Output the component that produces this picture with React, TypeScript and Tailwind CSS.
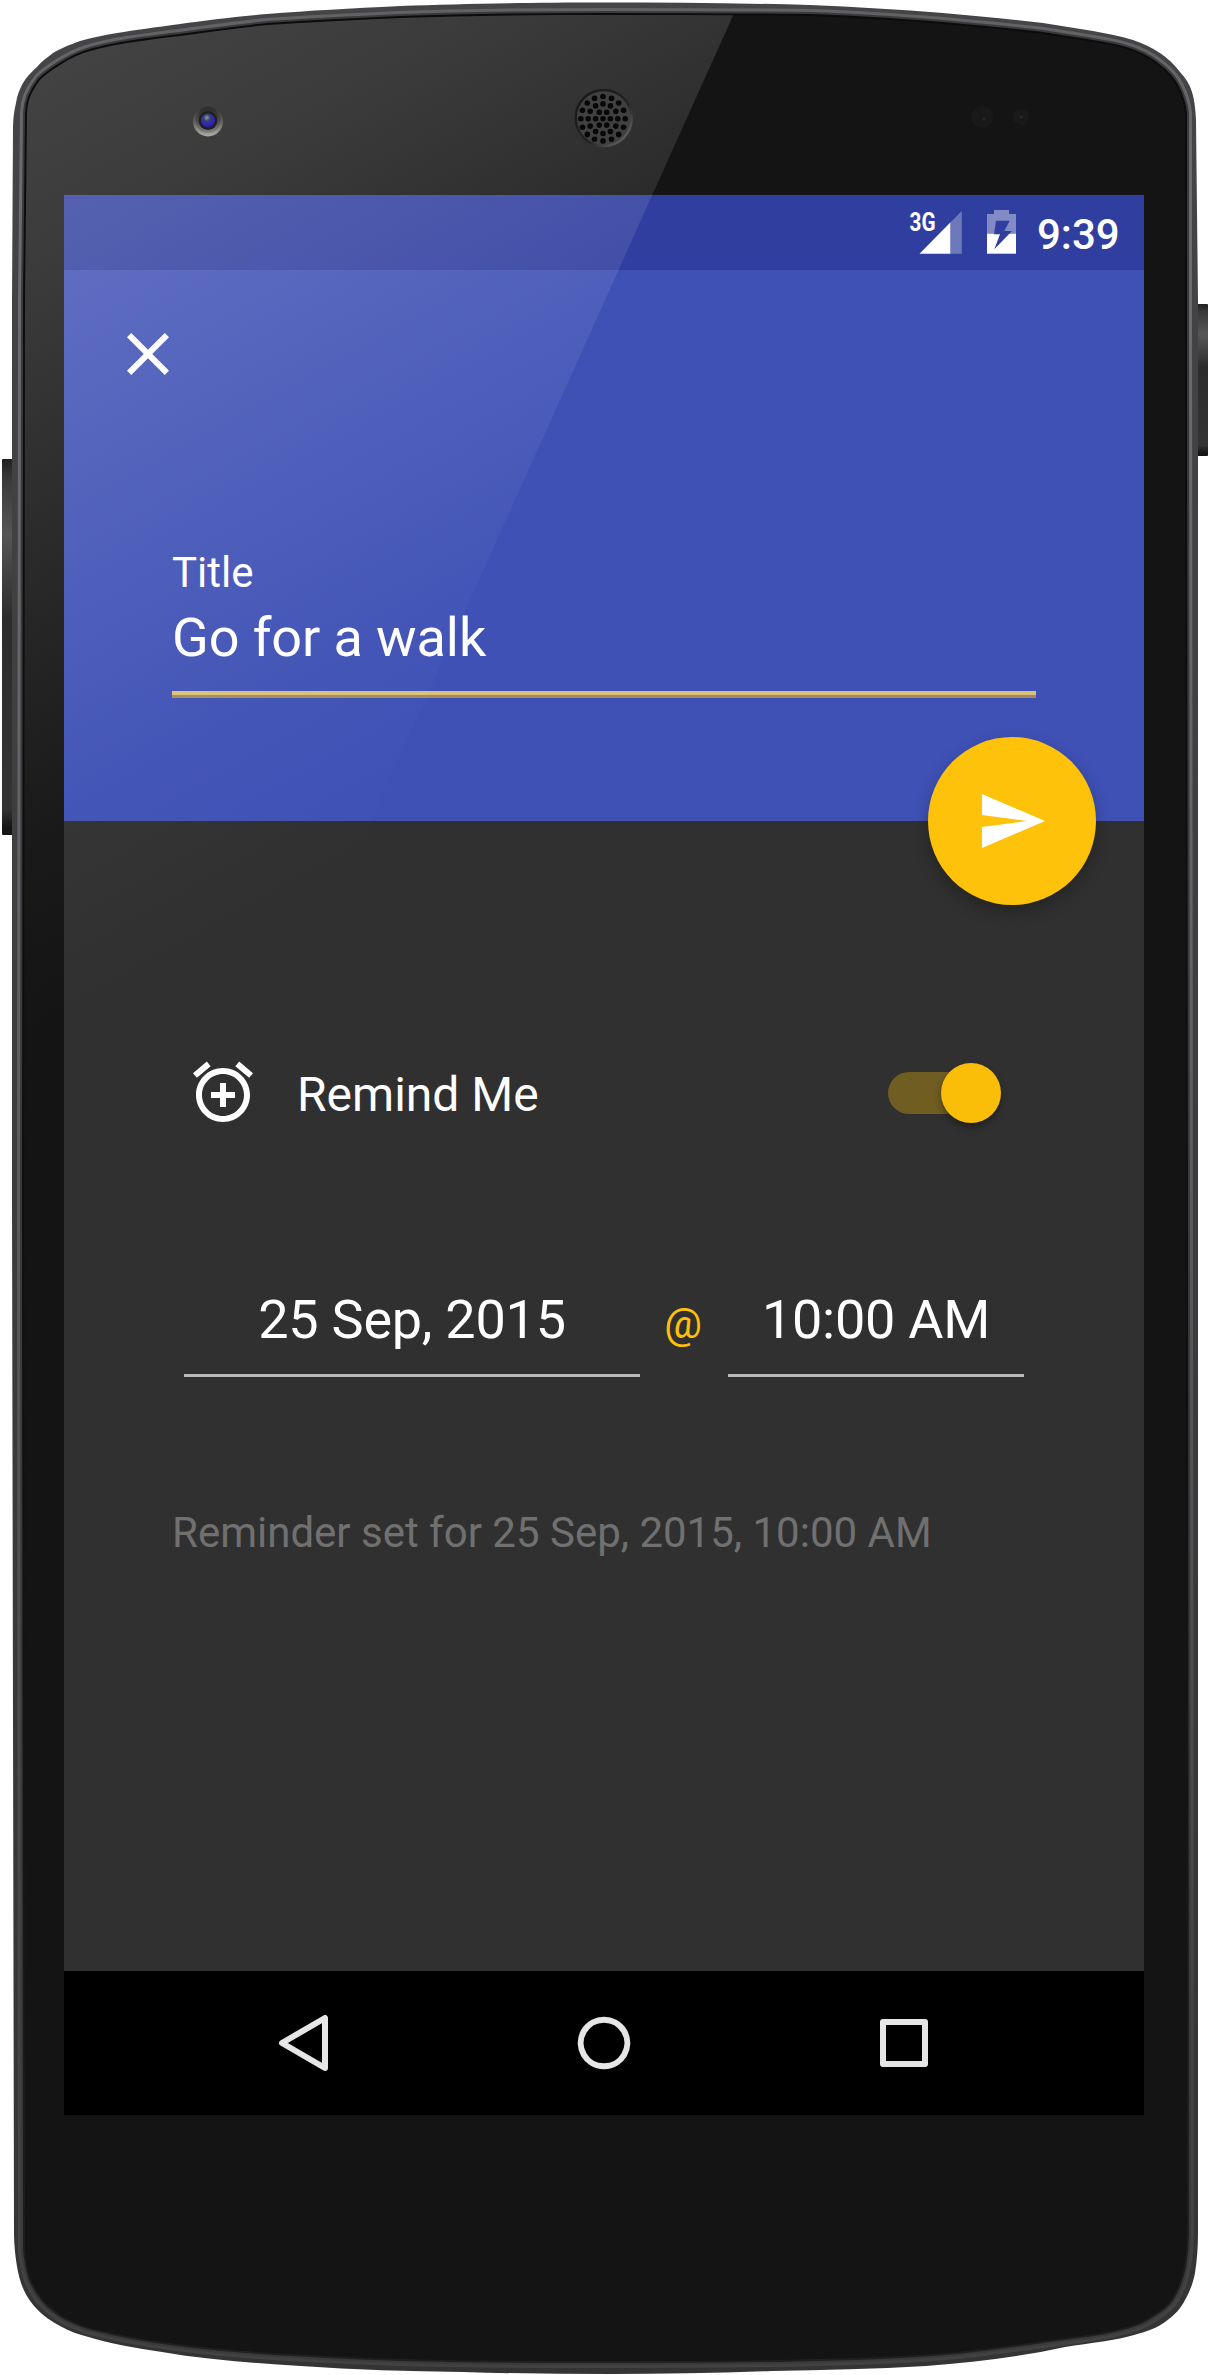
import React from "react";

const BODY =
  "M604 2.5C520 2.5 460 4 400 6C350 8.500 310 10.500 267 14C235 17 205 20.500 180 24C155 27.500 135 30 117 33C103 35.500 91 37.500 80 41C69 45 61 48.500 53 53C47 57.500 41 62 37 67C31 72.500 26 77.500 23 83C19.500 89 17 96 16 103C14 111 13.200 119 13 127L12 300L12 1200L14 2233C14 2245 16 2268 21 2283C25 2294 29 2300 35 2307C43 2316 52 2322 62 2327C69 2331 77 2334 85 2336C110 2344 136 2348 162 2352C208 2360 255 2363 301 2366C355 2370 409 2371 463 2372C512 2373.500 561 2374 610 2374C664 2374 718 2373 772 2371C824 2370 875 2369 926 2366C974 2362 1020 2357 1065 2347C1090 2343 1118 2340 1134 2335C1148 2331 1157 2328 1165 2322C1175 2315 1181 2308 1185 2300C1190 2291 1193 2283 1195 2273C1197 2260 1198 2247 1198 2233L1198 300L1196 120C1195.500 110 1194.500 100 1192 92C1189.500 84 1185.500 78 1180 72C1174.500 64.500 1168 58.500 1160 53C1152 47.500 1143 43.500 1133 40C1120 36 1107 33.500 1093 31L1043 23C1010 19 977 16 943 13C900 9.500 855 7 810 5C740 3 670 2.5 604 2.5Z";

const GLASS =
  "M604 15C535 15 467 15.500 400 18C355 20 311 22 267 25C237 28 208 32 180 36C162 38 144 40.500 127 43C112 45.500 98 48.500 87 52C76 55.500 68 60 60 65C52 70 45.500 74.500 40 80C36 85 32.500 91 30 97C28 102.500 27.200 108 27 113L25 300L24 1200L25 2250C26 2261 28 2271 31 2280C35 2289 40 2297 46 2303C55 2312 66 2319 77 2323C87 2328 98 2330 108 2332C134 2338 159 2342 185 2345C226 2350 268 2353 309 2355C340 2357 370 2358 401 2359C470 2361 540 2361 610 2361C680 2361 749 2361 818 2359C865 2358 912 2356 957 2352C994 2348 1030 2343 1065 2338C1085 2335 1105 2333 1119 2329C1132 2326 1142 2323 1150 2317C1160 2311 1169 2305 1173 2297C1179 2287 1182 2277 1184 2267C1186 2256 1187 2245 1187 2233L1185 300L1185 113C1184 104 1181 95 1177 87C1173 79 1167 72.500 1160 67C1153 61 1146 56.500 1137 53C1129 49.500 1120 47 1110 45C1088 41 1065 37.500 1043 34C1010 30 977 27 943 24C900 20.500 855 17.500 810 16C740 15 670 15 604 15Z";

const ring = (count: number, radius: number) =>
  Array.from({ length: count }, (_, i) => {
    const a = (i * 2 * Math.PI) / count;
    return [603 + radius * Math.cos(a), 118.7 + radius * Math.sin(a)];
  });

const holes = [[603, 118.7], ...ring(6, 7.4), ...ring(12, 14.8), ...ring(16, 22.2)];

function DeviceFrame() {
  return (
    <svg className="absolute inset-0" width="1210" height="2375" viewBox="0 0 1210 2375">
      <defs>
        <linearGradient id="rim" x1="0" y1="0" x2="0" y2="1">
          <stop offset="0" stopColor="#454547" />
          <stop offset="0.5" stopColor="#3c3c3e" />
          <stop offset="1" stopColor="#343434" />
        </linearGradient>
        <linearGradient id="shine" x1="0" y1="0" x2="0" y2="1">
          <stop offset="0" stopColor="#626265" />
          <stop offset="0.08" stopColor="#6d6d71" />
          <stop offset="0.4" stopColor="#626265" />
          <stop offset="0.85" stopColor="#444446" />
          <stop offset="1" stopColor="#424242" />
        </linearGradient>
        <linearGradient id="seam" x1="0" y1="0" x2="0" y2="1">
          <stop offset="0" stopColor="#0c0c0c" />
          <stop offset="0.6" stopColor="#101010" />
          <stop offset="1" stopColor="#202020" />
        </linearGradient>
        <linearGradient id="key" x1="0" y1="0" x2="0" y2="1">
          <stop offset="0" stopColor="#202020" />
          <stop offset="0.05" stopColor="#393939" />
          <stop offset="0.2" stopColor="#565656" />
          <stop offset="0.42" stopColor="#2c2c2c" />
          <stop offset="0.93" stopColor="#343434" />
          <stop offset="0.98" stopColor="#151515" />
        </linearGradient>
        <linearGradient id="lensRing" x1="0" y1="0" x2="0" y2="1">
          <stop offset="0" stopColor="#303030" />
          <stop offset="0.5" stopColor="#606060" />
          <stop offset="1" stopColor="#b0aeac" />
        </linearGradient>
        <linearGradient id="lensInner" x1="0" y1="0" x2="0" y2="1">
          <stop offset="0" stopColor="#2c2b2a" />
          <stop offset="0.5" stopColor="#4d4b49" />
          <stop offset="1" stopColor="#85827f" />
        </linearGradient>
        <radialGradient id="lens" cx="0.42" cy="0.3" r="0.7">
          <stop offset="0" stopColor="#86a0b0" />
          <stop offset="0.35" stopColor="#38406e" />
          <stop offset="0.8" stopColor="#2a20cc" />
          <stop offset="1" stopColor="#2a2060" />
        </radialGradient>
        <linearGradient id="speakerRim" x1="0" y1="0" x2="1" y2="1">
          <stop offset="0" stopColor="#161616" />
          <stop offset="0.6" stopColor="#252525" />
          <stop offset="1" stopColor="#777777" />
        </linearGradient>
        <clipPath id="bodyClip">
          <path d={BODY} />
        </clipPath>
      </defs>
      <rect x="2" y="459" width="12" height="376" rx="1" fill="url(#key)" />
      <rect x="1196" y="304" width="12" height="152" rx="1" fill="url(#key)" />
      <path d={BODY} fill="url(#rim)" />
      <g clipPath="url(#bodyClip)">
        <path d={GLASS} fill="none" stroke="url(#shine)" strokeWidth="14" />
        <path d={GLASS} fill="none" stroke="#3a3a3c" strokeWidth="8" />
        <path d={GLASS} fill="none" stroke="url(#seam)" strokeWidth="4" />
      </g>
      <path d={GLASS} fill="#141414" />
      <circle cx="982" cy="117" r="11" fill="#191919" />
      <circle cx="984" cy="119" r="1.500" fill="#3a211a" />
      <circle cx="1021" cy="117" r="8" fill="#191919" />
      <circle cx="1021" cy="117" r="1.500" fill="#3a211a" />
    </svg>
  );
}

function Glare() {
  return (
    <svg className="pointer-events-none absolute inset-0" width="1210" height="2375" viewBox="0 0 1210 2375">
      <defs>
        <linearGradient id="glare" gradientUnits="userSpaceOnUse" x1="0" y1="77" x2="417.5" y2="828">
          <stop offset="0" stopColor="#fff" stopOpacity="0.2" />
          <stop offset="0.21" stopColor="#fff" stopOpacity="0.168" />
          <stop offset="0.525" stopColor="#fff" stopOpacity="0.09" />
          <stop offset="0.79" stopColor="#fff" stopOpacity="0.025" />
          <stop offset="1" stopColor="#fff" stopOpacity="0" />
        </linearGradient>
        <clipPath id="glassClip">
          <path d={GLASS} />
        </clipPath>
      </defs>
      <path d="M0 0H740L245 1100H0Z" fill="url(#glare)" clipPath="url(#glassClip)" />
      <circle cx="208" cy="121.500" r="15" fill="url(#lensRing)" />
      <circle cx="208" cy="120.500" r="12.500" fill="url(#lensInner)" />
      <circle cx="208" cy="120.500" r="9.500" fill="#22201f" />
      <circle cx="208" cy="120.500" r="7" fill="url(#lens)" />
      <circle cx="603.7" cy="118" r="28" fill="#404040" stroke="url(#speakerRim)" strokeWidth="2.500" />
      {holes.map(([x, y], i) => (
        <circle key={i} cx={x} cy={y} r="2.800" fill="#070707" />
      ))}
    </svg>
  );
}

function StatusBar() {
  return (
    <div className="flex h-[75px] items-start bg-[#303f9f] text-white">
      <div className="mt-[15px] ml-[846px] w-[74px]">
        <svg className="overflow-visible" width="74" height="44" viewBox="910 210 74 44">
          <text x="909.500" y="230.700" fontSize="25.500" fontWeight="700" fill="#fff" textLength="26" lengthAdjust="spacingAndGlyphs">
            3G
          </text>
          <path d="M919.500 253.700L950.300 222.500V253.700Z" fill="#fff" />
          <path d="M950.300 222.500L961.800 211V253.700H950.300Z" fill="#fff" fillOpacity="0.3" />
        </svg>
      </div>
      <svg className="mt-[15px] ml-[3px]" width="29" height="44" viewBox="987 210 29 44">
        <path d="M987 214H994V210H1009V214H1016V233.700H987Z" fill="#fff" fillOpacity="0.4" />
        <path d="M987 233.700H1016V253.700H987Z" fill="#fff" />
        <path d="M996 220.700H1009.700L1004.300 231H1012L994.300 249.300L1000 234.300H994Z" fill="#303f9f" />
      </svg>
      <span className="mt-[15px] ml-[21px] text-[42px] leading-[49px] font-medium">9:39</span>
    </div>
  );
}

function Header() {
  return (
    <header className="relative h-[551px] bg-[#3f51b5] pl-[108px] text-white">
      <svg className="relative -left-[60px] top-[48px]" width="72" height="72" viewBox="0 0 24 24" fill="#fff">
        <path d="M19 6.410L17.590 5 12 10.590 6.410 5 5 6.410 10.590 12 5 17.590 6.410 19 12 13.410 17.590 19 19 17.590 13.410 12z" />
      </svg>
      <div className="w-[864px] pt-[207px]">
        <label className="block text-[42px] leading-[48px]">Title</label>
        <div className="mt-[9px] text-[54px] leading-[64px] tracking-[-0.1px]">Go for a walk</div>
        <div className="mt-[21px] h-[7px] border-t-4 border-b-3 border-t-[#dcc077] border-b-[#a08c5d]" />
      </div>
      <button className="absolute right-[48px] -bottom-[84px] flex size-[168px] items-center justify-center rounded-full bg-[#ffc20a] shadow-[0_6px_16px_rgba(0,0,0,0.26)]">
        <svg width="72" height="72" viewBox="0 0 24 24" fill="#fff">
          <path d="M2.010 21L23 12 2.010 3 2 10l15 2-15 2z" />
        </svg>
      </button>
    </header>
  );
}

function ReminderForm() {
  return (
    <main className="h-[1150px] bg-[#303030] pt-[235px] pl-[108px] text-white">
      <div className="flex h-[72px] w-[864px] items-center">
        <svg className="ml-[15px]" width="72" height="72" viewBox="0 0 24 24" fill="#fff">
          <path d="M7.880 3.390L6.600 1.860 2 5.710l1.290 1.530 4.590-3.850zM22 5.720l-4.600-3.860-1.290 1.530 4.600 3.860L22 5.720zM12 4c-4.970 0-9 4.030-9 9s4.020 9 9 9c4.970 0 9-4.030 9-9s-4.030-9-9-9zm0 16c-3.870 0-7-3.130-7-7s3.130-7 7-7 7 3.130 7 7-3.130 7-7 7zm1-11h-2v3H8v2h3v3h2v-3h3v-2h-3V9z" />
        </svg>
        <span className="mt-[5px] ml-[38px] text-[48px] leading-[56px]">Remind Me</span>
        <div className="relative mt-[1px] mr-[35px] ml-auto flex h-[60px] w-[113px] items-center">
          <div className="h-[42px] w-[105px] rounded-full bg-[#705d22]" />
          <div className="absolute top-0 right-0 size-[60px] rounded-full bg-[#fabe09] shadow-[0_4px_7px_rgba(0,0,0,0.35)]" />
        </div>
      </div>
      <div className="mt-[160px] ml-[12px] flex items-start">
        <div className="h-[89px] w-[456px] border-b-3 border-[#b9b9b9] text-center text-[54px] leading-[64px] tracking-[-0.25px]">25 Sep, 2015</div>
        <div className="w-[88px] pt-[11px] pr-[2px] text-center text-[42px] leading-[50px] text-[#ffc107]">@</div>
        <div className="h-[89px] w-[296px] border-b-3 border-[#b9b9b9] text-center text-[54px] leading-[64px] tracking-[-0.25px]">10:00 AM</div>
      </div>
      <p className="mt-[131px] text-[42px] leading-[50px] text-[#707070]">Reminder set for 25 Sep, 2015, 10:00 AM</p>
    </main>
  );
}

function NavBar() {
  return (
    <nav className="flex h-[144px] items-center justify-between bg-black px-[204px]">
      {["M14 36L57 11V61Z", "M36 12.700a23.300 23.300 0 1 0 .01 0Z", "M15 15H57V57H15Z"].map((d) => (
        <svg key={d} width="72" height="72" viewBox="0 0 72 72" fill="none" stroke="#e6e6e6" strokeWidth="6" strokeLinejoin="round">
          <path d={d} />
        </svg>
      ))}
    </nav>
  );
}

export default function App() {
  return (
    <div className="relative h-[2375px] w-[1210px] overflow-hidden bg-white pt-[195px] pl-[64px] font-['Roboto',sans-serif]">
      <DeviceFrame />
      <div className="relative flex w-[1080px] flex-col">
        <StatusBar />
        <div className="relative z-10">
          <Header />
        </div>
        <ReminderForm />
        <NavBar />
      </div>
      <div className="absolute inset-0 z-20">
        <Glare />
      </div>
    </div>
  );
}
